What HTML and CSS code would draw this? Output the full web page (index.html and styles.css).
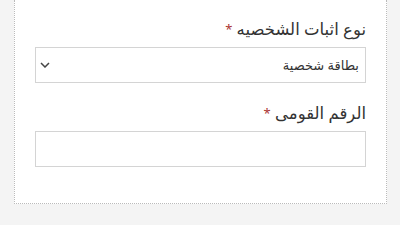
FILE: index.html
```html
<!DOCTYPE html>
<html lang="ar">
<head>
<meta charset="utf-8">
<link rel="stylesheet" href="styles.css">
</head>
<body>
<div class="page">
  <div class="card" dir="rtl">
    <div class="field">
      <label class="label">نوع اثبات الشخصيه <span class="req">*</span></label>
      <div class="select">
        <span class="select-value">بطاقة شخصية</span>
        <svg class="chevron" width="10" height="6" viewBox="0 0 10 6"><path d="M1 1 L5 5 L9 1" fill="none" stroke="#444" stroke-width="1.5"/></svg>
      </div>
    </div>
    <div class="field">
      <label class="label">الرقم القومى <span class="req">*</span></label>
      <div class="input"></div>
    </div>
  </div>
</div>
</body>
</html>
```
FILE: styles.css
```css
html, body {
  margin: 0;
  padding: 0;
  background: #f4f4f4;
}
body {
  font-family: "Noto Sans", "DejaVu Sans", sans-serif;
  color: #333;
  width: 400px;
  height: 225px;
  overflow: hidden;
}
.page {
  padding-left: 14px;
  width: 373px;
}
.card {
  background: #fff;
  border-left: 1px dotted #bbb;
  border-right: 1px dotted #bbb;
  border-bottom: 1px dotted #bbb;
  padding: 17px 20px 36px 20px;
}
.field {
  display: flex;
  flex-direction: column;
}
.field + .field {
  margin-top: 18px;
}
.label {
  font-size: 16.5px;
  line-height: 24px;
  color: #333;
  margin-bottom: 6px;
}
.req {
  color: #a33;
  font-size: 13px;
  vertical-align: top;
}
.select, .input {
  height: 34px;
  border: 1px solid #d4d4d4;
  background: #fff;
}
.select {
  display: flex;
  align-items: center;
  justify-content: space-between;
  padding: 0 6px 0 4px;
}
.select-value {
  font-size: 13px;
  color: #333;
}
.chevron {
  display: block;
}
```
